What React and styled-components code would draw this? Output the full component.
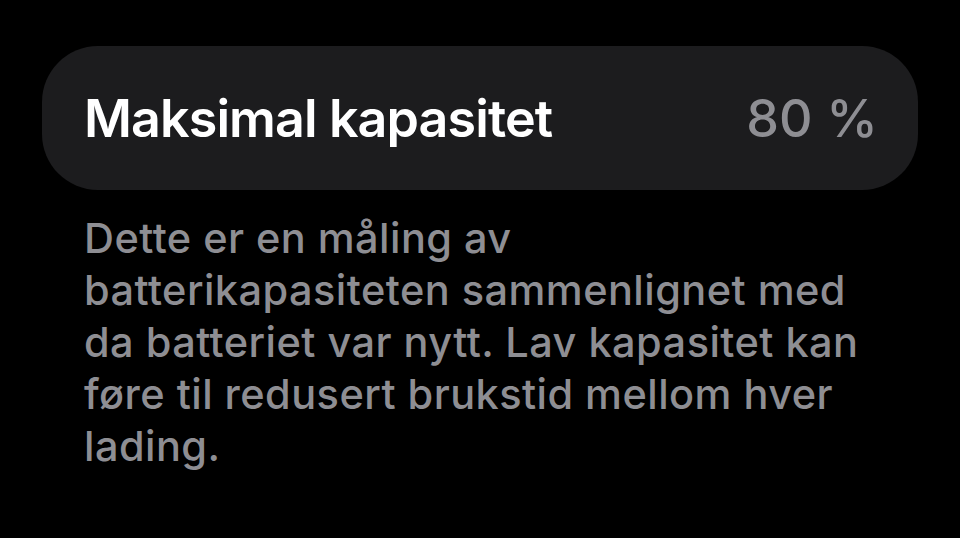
import React from 'react';
import styled, { createGlobalStyle } from 'styled-components';

const GlobalStyle = createGlobalStyle`
    html, body {
        margin: 0;
        padding: 0;
        background: #000;
    }
    body {
        font-family: Inter, "Noto Sans", "Liberation Sans", sans-serif;
        -webkit-font-smoothing: antialiased;
    }
`;

const Screen = styled.div`
    width: 960px;
    height: 538px;
    box-sizing: border-box;
    padding: 46px 42px 0;
    background: #000;
    overflow: hidden;
`;

const Row = styled.div`
    display: flex;
    align-items: center;
    justify-content: space-between;
    height: 144px;
    box-sizing: border-box;
    padding: 0 40px 0 42px;
    border-radius: 56px;
    background: #1c1c1e;
`;

const Label = styled.span`
    color: #fff;
    font-size: 52px;
    font-weight: 600;
    letter-spacing: -0.9px;
`;

const Value = styled.span`
    color: #8e8e93;
    font-size: 52px;
    font-weight: 500;
    letter-spacing: 0;
`;

const Footnote = styled.p`
    margin: 22px 0 0;
    padding: 0 42px;
    color: #8e8e93;
    font-size: 41.5px;
    font-weight: 500;
    line-height: 52px;
    letter-spacing: 0.45px;
    white-space: nowrap;
`;

// footnote wraps at fixed points, like the narrow settings column
const lines = [
    'Dette er en måling av',
    'batterikapasiteten sammenlignet med',
    'da batteriet var nytt. Lav kapasitet kan',
    'føre til redusert brukstid mellom hver',
    'lading.',
];

export default function App() {
    return (
        <Screen>
            <GlobalStyle />
            <Row>
                <Label>Maksimal kapasitet</Label>
                <Value>80 %</Value>
            </Row>
            <Footnote>
                {lines.map((line, i) => (
                    <React.Fragment key={i}>
                        {line}
                        {i < lines.length - 1 && <br />}
                    </React.Fragment>
                ))}
            </Footnote>
        </Screen>
    );
}
